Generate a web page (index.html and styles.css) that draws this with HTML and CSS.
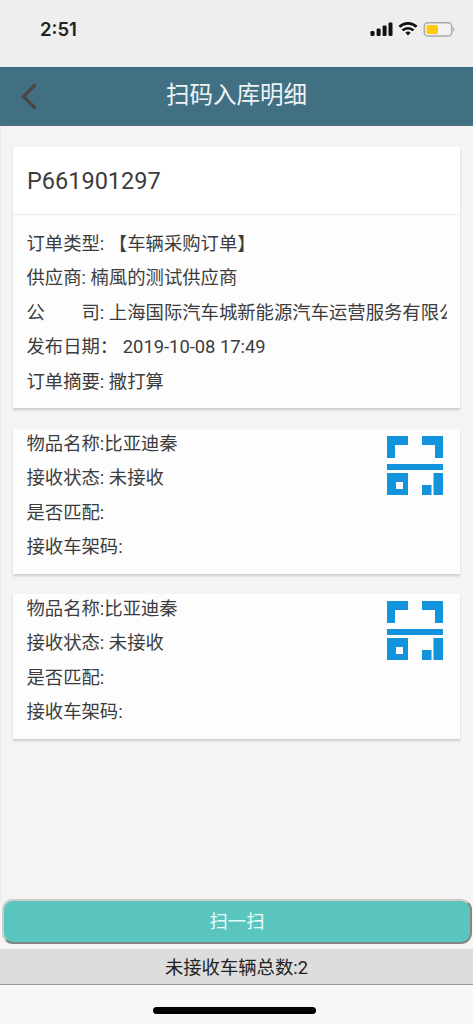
FILE: index.html
```html
<!DOCTYPE html>
<html lang="zh-CN">
<head>
<meta charset="utf-8">
<title>扫码入库明细</title>
<link rel="stylesheet" href="styles.css">
</head>
<body>
<div class="app">
  <div class="status">
    <span class="time">2:51</span>
    <svg class="indicators" width="86" height="18" viewBox="0 0 86 18">
      <g fill="#111">
        <rect x="0.5" y="11" width="4" height="5" rx="1.3"/>
        <rect x="6.6" y="8.500" width="4" height="7.5" rx="1.2"/>
        <rect x="12.6" y="5.500" width="4" height="10.5" rx="1.2"/>
        <rect x="18.5" y="2.500" width="4" height="13.5" rx="1.2"/>
        <path d="M38 15.5l-2.6-2.7a3.7 3.7 0 0 1 5.2 0z"/>
      </g>
      <g fill="none" stroke="#111" stroke-width="2.6">
        <path d="M29.4 6.8a12.4 12.4 0 0 1 17.2 0"/>
        <path d="M32.5 10.4a8 8 0 0 1 11 0"/>
      </g>
      <rect x="54.3" y="2.800" width="27.4" height="13.2" rx="3.6" fill="#f3f3f3" stroke="#aaa" stroke-width="1.5"/>
      <rect x="56.5" y="5" width="11.5" height="9" rx="1.5" fill="#ffcb0b"/>
      <path d="M83 7q3 2.4 0 4.800z" fill="#aaa"/>
    </svg>
  </div>
  <header class="navbar">
    <svg class="back" width="18" height="28" viewBox="0 0 18 28"><path d="M15.500 1.500L3.500 13.500l12 12" fill="none" stroke="#4b4542" stroke-width="3.300"/></svg>
    <h1 class="title">扫码入库明细</h1>
  </header>
  <main class="content">
    <section class="card order">
      <h2 class="order-no">P661901297</h2>
      <div class="order-info">
        <p class="row">订单类型: 【车辆采购订单】</p>
        <p class="row">供应商: 楠風的测试供应商</p>
        <p class="row">公　　司: 上海国际汽车城新能源汽车运营服务有限公司</p>
        <p class="row">发布日期： 2019-10-08 17:49</p>
        <p class="row">订单摘要: 撒打算</p>
      </div>
    </section>
    <section class="card item">
      <div class="item-info">
        <p class="row">物品名称:比亚迪秦</p>
        <p class="row">接收状态: 未接收</p>
        <p class="row">是否匹配:</p>
        <p class="row">接收车架码:</p>
      </div>
      <svg class="scan" width="56" height="59" viewBox="0 0 56 59"><path fill="#1194dc" fill-rule="evenodd" d="M0 0h21v9H8v13H0zM35 0h21v22h-8V9H35zM0 28h56v6H0zM0 37h21v22H0zM9 46v7h7v-7zM35 49h9.500v10H35zM46.500 37H56v22h-9.500z"/></svg>
    </section>
    <section class="card item">
      <div class="item-info">
        <p class="row">物品名称:比亚迪秦</p>
        <p class="row">接收状态: 未接收</p>
        <p class="row">是否匹配:</p>
        <p class="row">接收车架码:</p>
      </div>
      <svg class="scan" width="56" height="59" viewBox="0 0 56 59"><path fill="#1194dc" fill-rule="evenodd" d="M0 0h21v9H8v13H0zM35 0h21v22h-8V9H35zM0 28h56v6H0zM0 37h21v22H0zM9 46v7h7v-7zM35 49h9.500v10H35zM46.500 37H56v22h-9.500z"/></svg>
    </section>
  </main>
  <div class="action"><button class="scan-btn">扫一扫</button></div>
  <div class="total">未接收车辆总数:2</div>
  <div class="home"><div class="home-bar"></div></div>
</div>
</body>
</html>
```

FILE: styles.css
```css
* { box-sizing: border-box; margin: 0; padding: 0; }
body {
  font-family: Roboto, "Noto Sans CJK SC", sans-serif;
  font-size: 18.35px;
  color: #3c3c3c;
}
.app {
  display: flex;
  flex-direction: column;
  height: 1024px;
  background: #f4f4f4;
  overflow: hidden;
}
.status {
  display: flex;
  justify-content: space-between;
  flex: none;
  height: 67px;
  padding: 20px 17px 0 40px;
  background: #eee;
}
.time {
  font-family: Inter, sans-serif;
  font-size: 18.5px;
  font-weight: 600;
  line-height: 19px;
  color: #222;
}
.navbar {
  display: grid;
  grid-template-columns: 60px 1fr 60px;
  align-items: center;
  flex: none;
  height: 59px;
  background: #427083;
  border-top: 1px solid #35677a;
  border-bottom: 1px solid #55717e;
}
.back { margin-left: 20px; }
.title {
  height: 57px;
  font-size: 23.5px;
  font-weight: 400;
  line-height: 55px;
  text-align: center;
  color: #edf4f6;
}
.content {
  flex: 1;
  padding: 21px 13px 0 12px;
  border-left: 1px solid #e9e9e9;
}
.card {
  background: #fdfdfd;
  box-shadow: 0 2px 2px #ccc;
}
.order { height: 261px; }
.order-no {
  height: 68px;
  padding-left: 14px;
  font-size: 23.5px;
  font-weight: 400;
  line-height: 68px;
  background: #fff;
  border-bottom: 1px solid #eee;
}
.order-info { padding: 12px 13px 0 13.5px; }
.row {
  height: 34.4px;
  line-height: 34.4px;
  white-space: nowrap;
  overflow: hidden;
}
.item {
  display: flex;
  justify-content: space-between;
  height: 145px;
  margin-top: 21px;
  padding: 0 17px 0 13.5px;
}
.item + .item { margin-top: 20px; }
.item-info { margin-top: -2px; }
.scan { margin-top: 6.5px; }
.action {
  flex: none;
  height: 50px;
  padding: 0 1px 0 2px;
}
.scan-btn {
  display: block;
  width: 100%;
  height: 45px;
  font: inherit;
  line-height: 39px;
  color: #e8fffb;
  background: #5ac5bf;
  border: 2px solid;
  border-color: #c9cccb #858585 #858585 #c9cccb;
  border-radius: 11px;
}
.total {
  flex: none;
  height: 36px;
  line-height: 37px;
  text-align: center;
  color: #222;
  background: #ddd;
  border-bottom: 1px solid #999;
}
.home {
  flex: none;
  display: flex;
  justify-content: center;
  height: 39px;
  padding: 22px 5px 0 0;
  background: #f8f8f8;
}
.home-bar {
  width: 163px;
  height: 7px;
  border-radius: 4px;
  background: #000;
}
```
